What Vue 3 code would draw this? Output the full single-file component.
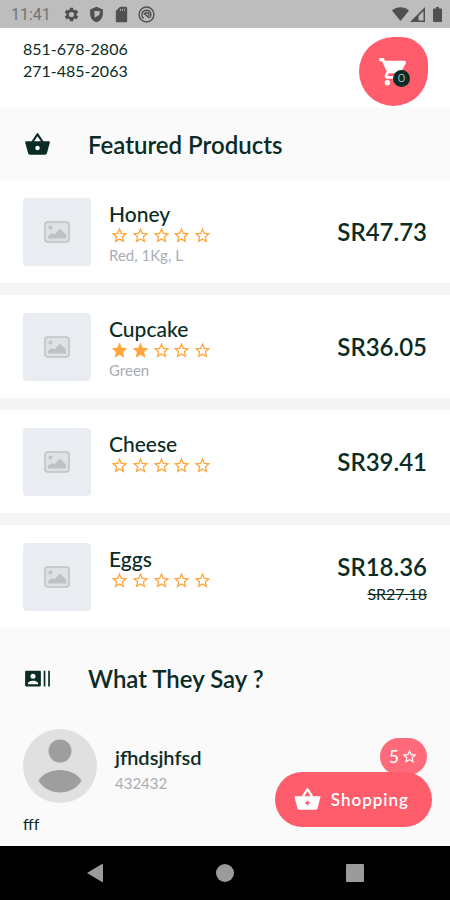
<script setup>
const products = [
  { name: 'Honey', rating: 0, options: 'Red, 1Kg, L', price: 'SR47.73' },
  { name: 'Cupcake', rating: 2, options: 'Green', price: 'SR36.05' },
  { name: 'Cheese', rating: 0, price: 'SR39.41' },
  { name: 'Eggs', rating: 0, price: 'SR18.36', oldPrice: 'SR27.18' },
]

const starFull = 'M12 17.27 18.18 21l-1.64-7.03L22 9.24l-7.19-.61L12 2 9.19 8.63 2 9.24l5.46 4.73L5.82 21z'
const starOutline = 'M22 9.24l-7.19-.62L12 2 9.19 8.63 2 9.24l5.46 4.73L5.82 21 12 17.27 18.18 21l-1.63-7.03L22 9.24zM12 15.4l-3.76 2.27 1-4.28-3.32-2.88 4.38-.38L12 6.1l1.71 4.04 4.38.38-3.32 2.88 1 4.28L12 15.4z'
</script>

<template>
  <div class="screen">
    <div class="status">
      <span class="clock">11:41</span>
      <svg class="status-icon" viewBox="0 0 24 24" aria-hidden="true">
        <path d="M19.14 12.94c.04-.3.06-.61.06-.94s-.02-.64-.07-.94l2.03-1.58a.49.49 0 0 0 .12-.61l-1.92-3.32a.49.49 0 0 0-.59-.22l-2.39.96a7 7 0 0 0-1.62-.94l-.36-2.54a.48.48 0 0 0-.48-.41h-3.84c-.24 0-.43.17-.47.41l-.36 2.54c-.59.24-1.13.57-1.62.94l-2.39-.96a.48.48 0 0 0-.59.22L2.74 8.87c-.12.21-.08.47.12.61l2.03 1.58a7 7 0 0 0 0 1.88l-2.03 1.58a.49.49 0 0 0-.12.61l1.92 3.32c.12.22.37.29.59.22l2.39-.96c.5.38 1.03.7 1.62.94l.36 2.54c.05.24.24.41.48.41h3.84c.24 0 .44-.17.47-.41l.36-2.54a7 7 0 0 0 1.62-.94l2.39.96c.22.08.47 0 .59-.22l1.92-3.32a.49.49 0 0 0-.12-.61zM12 15.6a3.6 3.6 0 1 1 0-7.2 3.6 3.6 0 0 1 0 7.2z" />
      </svg>
      <svg class="status-icon" viewBox="0 0 24 24" aria-hidden="true">
        <path fill-rule="evenodd" d="M12 1 3 5v6c0 5.550 3.840 10.740 9 12 5.160-1.260 9-6.450 9-12V5zM9 7l8 .5-1 5-6.500 4z" />
      </svg>
      <svg class="status-icon" viewBox="0 0 24 24" aria-hidden="true">
        <path fill-rule="evenodd" d="M18 1h-8L4 7v14c0 1.100.9 2 2 2h12c1.100 0 2-.9 2-2V3c0-1.100-.9-2-2-2zM10 4h1v3h-1zM13 4h1v3h-1zM16 4h1v3h-1z" />
      </svg>
      <svg class="status-icon status-ring" viewBox="0 0 24 24" aria-hidden="true">
        <circle cx="12" cy="12" r="10.500" />
        <path d="M8 17.500A6.500 6.500 0 0 1 9 6.500l3-.5a6.500 6.500 0 0 1 5 10.500M8 10l8 7M10 9.500l5 .5.5 4" />
      </svg>
      <span class="status-gap"></span>
      <svg class="wifi" viewBox="0 0 17 14" aria-hidden="true"><path d="M8.500 14 0 3.500C5-.8 12-.8 17 3.500z" /></svg>
      <svg class="signal" viewBox="0 0 15 15" aria-hidden="true">
        <path fill-rule="evenodd" d="M15 0v15H0zM13.500 4v9.500H8.500V9z" />
      </svg>
      <svg class="battery" viewBox="0 0 9 15" aria-hidden="true"><path d="M3 0h3v1.500h2q1 0 1 1V14q0 1-1 1H1q-1 0-1-1V2.500q0-1 1-1h2z" /></svg>
    </div>

    <header class="top">
      <div class="phones">
        <div>851-678-2806</div>
        <div>271-485-2063</div>
      </div>
      <button class="cart" type="button" aria-label="Cart">
        <svg viewBox="0 0 24 24" aria-hidden="true">
          <path d="M7 18a2 2 0 1 0 0 4 2 2 0 0 0 0-4zM1 1.500v2.500h2l3.600 7.590-1.350 2.450C4.520 15.370 5.480 17 7 17h12v-2H7.420a.25.25 0 0 1-.25-.25l.03-.12.9-1.630h7.450c.75 0 1.410-.41 1.750-1.030L21 5.300C21.300 4.700 20.700 3.500 20 3.500H5.210l-.94-2zm16 16.500a2 2 0 1 0 0 4 2 2 0 0 0 0-4z" />
        </svg>
        <span class="count">0</span>
      </button>
    </header>

    <main>
      <h2 class="section">
        <svg viewBox="0 0 24 24" aria-hidden="true">
          <path d="M17.210 9l-4.380-6.560a1 1 0 0 0-1.660.01L6.790 9H2c-.55 0-1 .45-1 1 0 .09.01.18.04.27l2.540 9.270C3.810 20.380 4.580 21 5.500 21h13c.92 0 1.690-.62 1.930-1.460l2.540-9.270L23 10c0-.55-.45-1-1-1zM9 9l3-4.400L15 9zm3 8a2 2 0 1 1 0-4 2 2 0 0 1 0 4z" />
        </svg>
        Featured Products
      </h2>

      <ul class="products">
        <li v-for="p in products" :key="p.name" class="product">
          <div class="thumb">
            <svg viewBox="0 0 26 22" aria-hidden="true">
              <rect x="1" y="1" width="24" height="20" rx="3" class="frame" />
              <circle cx="6.500" cy="6.500" r="2" />
              <path d="M4 17.500v-2.500l4-3 2.500 1.500L16 7.500l6 6v4z" />
            </svg>
          </div>
          <div class="info">
            <h3>{{ p.name }}</h3>
            <div class="stars" role="img" :aria-label="`${p.rating} of 5`">
              <svg v-for="n in 5" :key="n" viewBox="0 0 24 24" aria-hidden="true">
                <path :d="n <= p.rating ? starFull : starOutline" />
              </svg>
            </div>
            <p v-if="p.options">{{ p.options }}</p>
          </div>
          <div class="cost">
            <strong>{{ p.price }}</strong>
            <s v-if="p.oldPrice">{{ p.oldPrice }}</s>
          </div>
        </li>
      </ul>

      <h2 class="section section-tall">
        <svg viewBox="0 0 24 24" aria-hidden="true">
          <path d="M21.500 5v14H23V5zm-4 14H19V5h-1.500zM14 5H2c-.55 0-1 .45-1 1v12c0 .55.45 1 1 1h12c.55 0 1-.45 1-1V6c0-.55-.45-1-1-1zM8 7.750a2.250 2.250 0 1 1 0 4.500 2.250 2.250 0 0 1 0-4.500zM12.500 17h-9v-.75c0-1.500 3-2.250 4.500-2.250s4.500.75 4.500 2.250z" />
        </svg>
        What They Say ?
      </h2>

      <article class="review">
        <div class="author">
          <svg class="avatar" viewBox="0 0 74 74" aria-hidden="true">
            <circle class="disc" cx="37" cy="37" r="37" />
            <circle cx="37" cy="22" r="11.500" />
            <path d="M15.500 51.500C24 37.500 50 37.500 58.500 51.500 50 67.500 24 67.500 15.500 51.500z" />
          </svg>
          <div class="who">
            <h3>jfhdsjhfsd</h3>
            <p>432432</p>
          </div>
          <div class="score">
            5
            <svg viewBox="0 0 24 24" aria-hidden="true"><path :d="starOutline" /></svg>
          </div>
        </div>
        <p class="comment">fff</p>
      </article>

      <button class="shop" type="button">
        <svg viewBox="0 0 24 24" aria-hidden="true">
          <path d="M17.210 9l-4.380-6.560a1 1 0 0 0-1.660.01L6.790 9H1c-.4 0-.6.4-.5.8l2.600 10.200c.2.600.600 1 1.200 1h15.400c.6 0 1-.4 1.200-1l2.600-10.200c.1-.4-.1-.8-.5-.8zM9.300 9l2.700-4.400L14.700 9zm1.900 8v-1.200H10v-1.600h1.200V13h1.600v1.200H14v1.600h-1.200V17z" />
        </svg>
        Shopping
      </button>
    </main>

    <nav class="system">
      <button type="button" aria-label="Back">
        <svg viewBox="0 0 20 20" aria-hidden="true"><path d="M2 10 17 1q1-.4 1 .8v16.400q0 1.200-1 .8z" /></svg>
      </button>
      <button type="button" aria-label="Home">
        <svg viewBox="0 0 20 20" aria-hidden="true"><circle cx="10" cy="10" r="9" /></svg>
      </button>
      <button type="button" aria-label="Recent">
        <svg viewBox="0 0 20 20" aria-hidden="true"><rect x="1" y="1" width="18" height="18" rx="1" /></svg>
      </button>
    </nav>
  </div>
</template>

<style>
body {
  margin: 0;
}
</style>

<style scoped>
.screen {
  display: flex;
  flex-direction: column;
  min-height: 100vh;
  background: #fafafa;
  color: #0b2c25;
  font-family: Lato, "Liberation Sans", sans-serif;
}

h2, h3, p, ul {
  margin: 0;
  padding: 0;
}

button {
  border: 0;
  padding: 0;
  font-family: inherit;
  cursor: pointer;
}

svg {
  display: block;
  flex: none;
  fill: currentColor;
}

.status {
  display: flex;
  align-items: center;
  height: 28px;
  padding: 0 8px 0 11px;
  background: #bdbdbd;
  color: #505050;
}

.clock {
  margin-right: 12px;
  color: #737373;
  font-family: Roboto, sans-serif;
  font-size: 16px;
}

.status-icon {
  width: 17px;
  height: 17px;
  margin-right: 8px;
}

.status-ring {
  fill: none;
  stroke: currentColor;
  stroke-width: 2;
}

.status-gap {
  flex: 1;
}

.wifi {
  width: 17px;
  height: 14px;
}

.signal {
  width: 15px;
  height: 15px;
  margin: 0 8px 0 1px;
}

.battery {
  width: 9px;
  height: 15px;
}

.top {
  display: flex;
  justify-content: space-between;
  align-items: flex-start;
  height: 80px;
  box-sizing: border-box;
  padding: 9px 22px 0 23px;
  background: #fff;
}

.phones {
  padding-top: 1px;
  font-size: 16px;
  line-height: 22px;
}

.cart {
  position: relative;
  display: flex;
  align-items: center;
  justify-content: center;
  width: 69px;
  height: 69px;
  border-radius: 50% 27px 50% 50%;
  background: #ff5c6c;
  color: #fff;
}

.cart svg {
  width: 32px;
  height: 32px;
}

.count {
  position: absolute;
  right: 18px;
  bottom: 19px;
  width: 17px;
  height: 17px;
  border-radius: 50%;
  background: #0b2c25;
  font-size: 12px;
  font-weight: 300;
  line-height: 15px;
  text-align: center;
}

main {
  position: relative;
  flex: 1;
}

.section {
  display: flex;
  align-items: center;
  gap: 37px;
  height: 72px;
  padding: 0 24px;
  font-size: 24px;
  font-weight: 600;
}

.section svg {
  width: 27px;
  height: 27px;
}

.section-tall {
  height: 101px;
}

.products {
  display: grid;
  gap: 12px;
  background: #f5f5f5;
  list-style: none;
}

.product {
  display: flex;
  align-items: center;
  gap: 18px;
  padding: 18px 23px 17px;
  background: #fff;
}

.thumb {
  display: grid;
  place-items: center;
  width: 68px;
  height: 68px;
  border-radius: 4px;
  background: #e9edf1;
  color: #bfc1c3;
}

.thumb svg {
  width: 26px;
  height: 22px;
}

.frame {
  fill: #dfe2e4;
  stroke: currentColor;
  stroke-width: 1.5;
}

.info {
  flex: 1;
  align-self: flex-start;
  padding-top: 3px;
}

.info h3 {
  font-size: 21px;
  font-weight: 500;
  line-height: 25px;
}

.stars {
  display: flex;
  justify-content: space-between;
  width: 102px;
  margin-left: 1px;
  color: #ffa53c;
}

.stars svg {
  width: 19px;
  height: 19px;
}

.info p,
.who p {
  color: #a9adb5;
  line-height: 20px;
}

.info p {
  font-size: 15px;
}

.who p {
  font-size: 15px;
}

.cost {
  display: grid;
  justify-items: end;
}

.cost strong {
  font-size: 24px;
  font-weight: 600;
  line-height: 34px;
}

.cost s {
  font-size: 16px;
  line-height: 20px;
}

.review {
  padding: 0 23px;
}

.author {
  display: flex;
  align-items: center;
}

.avatar {
  width: 74px;
  height: 74px;
  color: #9e9e9e;
}

.disc {
  fill: #e0e0e0;
}

.who {
  flex: 1;
  padding: 2px 0 0 18px;
}

.who h3 {
  font-size: 20px;
  font-weight: 600;
  line-height: 32px;
}

.score {
  display: flex;
  align-items: center;
  justify-content: center;
  align-self: flex-start;
  gap: 2px;
  width: 47px;
  height: 37px;
  margin-top: 9px;
  border-radius: 19px;
  background: #ff6b7a;
  color: #fff;
  font-size: 17px;
}

.score svg {
  width: 17px;
  height: 17px;
}

.comment {
  padding: 11px 0 12px;
  font-size: 16px;
  line-height: 20px;
}

.shop {
  position: absolute;
  right: 18px;
  bottom: 19px;
  display: flex;
  align-items: center;
  gap: 10px;
  height: 55px;
  padding: 0 23px 0 19px;
  border-radius: 28px;
  background: #ff5c6c;
  color: #fff;
  font-size: 17px;
  font-weight: 600;
  letter-spacing: 1px;
}

.shop svg {
  width: 27px;
  height: 27px;
}

.system {
  display: flex;
  align-items: center;
  justify-content: space-around;
  height: 54px;
  padding: 0 30px;
  background: #000;
}

.system button {
  width: 20px;
  height: 20px;
  background: none;
  color: #9b9b9b;
}
</style>
